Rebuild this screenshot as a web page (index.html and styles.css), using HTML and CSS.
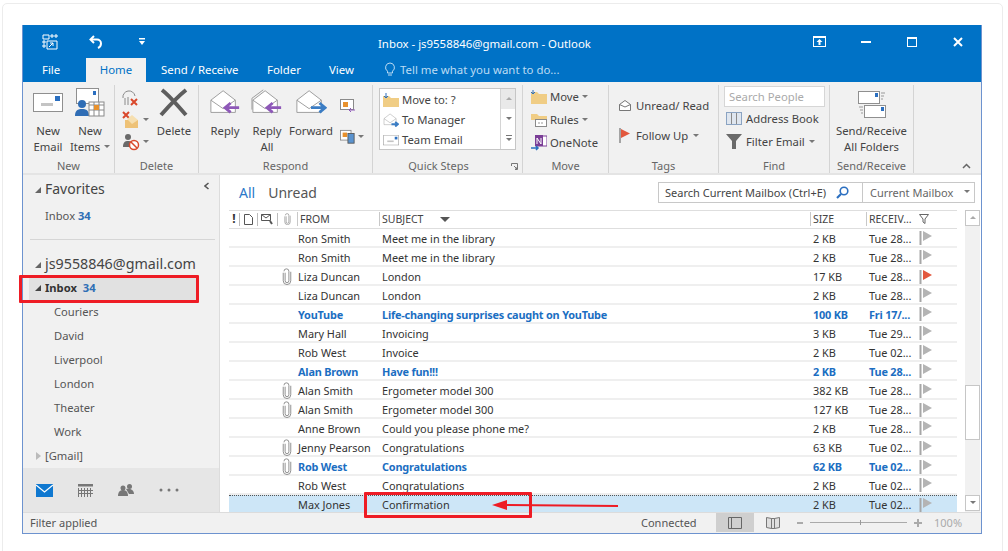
FILE: index.html
```html
<!DOCTYPE html>
<html lang="en">
<head>
  <meta charset="UTF-8" />
  <title>Inbox - js9558846@gmail.com - Outlook</title>
  <link rel="stylesheet" href="styles.css">
</head>
<body>
  <svg class="defs" width="0" height="0">
    <symbol id="clip" viewBox="0 0 10 18">
      <path d="M3 5v8.500a2 2 0 0 0 4 0V3.500a2.600 2.600 0 0 0-5.200 0M1 5v8.500a4 4 0 0 0 8 0V4" fill="none" stroke="#8a8a8a" stroke-width="1"/>
    </symbol>
    <symbol id="flag" viewBox="0 0 14 16">
      <path d="M1.500 1v14" stroke="#a6a6a6" stroke-width="2"/>
      <path d="M4 1l9 5-9 5z" fill="#b4b4b4"/>
    </symbol>
    <symbol id="flag-red" viewBox="0 0 14 16">
      <path d="M1.500 1v14" stroke="#a6a6a6" stroke-width="2"/>
      <path d="M4 1l9 5-9 5z" fill="#e2583e"/>
    </symbol>
    <symbol id="open-mail" viewBox="0 0 34 30">
      <path d="M2 12L15 2l13 10v13H2z" fill="#fff" stroke="#9a9a9a"/>
      <path d="M2 12l13 9 13-9" fill="none" stroke="#9a9a9a"/>
    </symbol>
    <symbol id="mail-card" viewBox="0 0 30 20">
      <rect x=".5" y=".5" width="29" height="18" fill="#fff" stroke="#8f8f8f"/>
      <rect x="22" y="3" width="5" height="5" fill="#2b6fc0"/>
      <rect x="8" y="10" width="12" height="3" fill="#c4c4c4"/>
    </symbol>
  </svg>

  <main class="card">
    <div class="window">
      <header class="titlebar">
        <div class="qat">
          <svg class="qat-app" width="16" height="16" viewBox="0 0 16 16"><path d="M1 1h6v4H1zM9 1h2v2H9zM13 1h2v2h-2zM1 7h2v2H1zM1 11h2v2H1zM5 7h10v8H5z" fill="none" stroke="#fff"/><path d="M7 13l4-4M8 9h3v3" fill="none" stroke="#fff"/></svg>
          <svg class="qat-undo" width="15" height="14" viewBox="0 0 15 14"><path d="M5 1L1.500 4.500 5 8" fill="none" stroke="#fff" stroke-width="2"/><path d="M2 4.500h6a4 4 0 0 1 4 4c0 2-1 3.500-3 4.500" fill="none" stroke="#fff" stroke-width="2"/></svg>
          <svg class="qat-more" width="6" height="7" viewBox="0 0 6 7"><path d="M0 0h6v1.500H0zM0 3h6L3 7z" fill="#fff"/></svg>
        </div>
        <div class="title">Inbox - js9558846@gmail.com - Outlook</div>
        <div class="winbtns">
          <svg width="13" height="11" viewBox="0 0 13 11"><rect x=".5" y=".5" width="12" height="10" fill="none" stroke="#fff"/><rect y="0" width="13" height="2" fill="#fff"/><path d="M6.500 3l3 3H7.500v3h-2V6h-2z" fill="#fff"/></svg>
          <svg width="10" height="2" viewBox="0 0 10 2"><rect width="10" height="2" fill="#fff"/></svg>
          <svg width="10" height="10" viewBox="0 0 10 10"><rect x=".5" y=".5" width="9" height="9" fill="none" stroke="#fff"/><rect width="10" height="2" fill="#fff"/></svg>
          <svg width="10" height="10" viewBox="0 0 10 10"><path d="M1 1l8 8M9 1l-8 8" stroke="#fff" stroke-width="2"/></svg>
        </div>
      </header>

      <nav class="tabs">
        <span class="tab tab-file">File</span>
        <span class="tab tab-home">Home</span>
        <span class="tab tab-send">Send / Receive</span>
        <span class="tab tab-folder">Folder</span>
        <span class="tab tab-view">View</span>
        <span class="tellme">
          <svg width="12" height="15" viewBox="0 0 12 15"><path d="M6 1a4.500 4.500 0 0 0-2.500 8.200V11h5V9.200A4.500 4.500 0 0 0 6 1zM4 13h4" fill="none" stroke="#bcdcf4"/></svg>
          Tell me what you want to do...
        </span>
      </nav>

      <section class="ribbon">
        <div class="group group-new">
          <div class="group-body">
            <div class="bigbtn">
              <svg class="bigicon" width="30" height="20"><use href="#mail-card"/></svg>
              <span>New<br>Email</span>
            </div>
            <div class="bigbtn">
              <svg class="bigicon" width="30" height="30" viewBox="0 0 30 30"><rect x="1.500" y=".5" width="22" height="15" fill="#fff" stroke="#8f8f8f"/><rect x="18" y="3" width="3" height="4" fill="#2b6fc0"/><circle cx="7" cy="16" r="4" fill="#2f6db5"/><path d="M0 28c0-6 3-7 7-7s7 1 7 7z" fill="#2f6db5"/><rect x="14" y="14" width="15" height="14" fill="#fff" stroke="#8a8a8a"/><path d="M14 17h15M19 14v14M24 14v14M14 22h15" stroke="#8a8a8a"/><rect x="19" y="17" width="5" height="5" fill="#e8912d"/></svg>
              <span>New<br>Items <i class="caret"></i></span>
            </div>
          </div>
          <div class="group-label">New</div>
        </div>

        <div class="group group-delete">
          <div class="group-body">
            <div class="smallcol">
              <svg width="18" height="18" viewBox="0 0 18 18"><path d="M1 9a6 6 0 0 1 12-2" fill="none" stroke="#8a8a8a"/><path d="M3 9v7M6 8v8" stroke="#8a8a8a"/><path d="M9 10l6 6M15 10l-6 6" stroke="#d9482b" stroke-width="2"/></svg>
              <span class="iconrow"><svg width="18" height="18" viewBox="0 0 18 18"><path d="M1 1l6 6M7 1L1 7" stroke="#d9482b" stroke-width="2"/><path d="M3 9h13v8H3z" fill="#eec277"/><path d="M5 8l5-4 6 5-6 4z" fill="#f6dfb0"/></svg><i class="caret"></i></span>
              <span class="iconrow"><svg width="18" height="18" viewBox="0 0 18 18"><circle cx="6" cy="4" r="3" fill="#6a6a6a"/><path d="M1 14c0-5 2-6 5-6s5 1 5 6z" fill="#6a6a6a"/><circle cx="12" cy="12" r="4.500" fill="#fff" stroke="#d9482b" stroke-width="1.500"/><path d="M9 9l6 6" stroke="#d9482b" stroke-width="1.500"/></svg><i class="caret"></i></span>
            </div>
            <div class="bigbtn btn-delete">
              <svg class="bigicon" width="30" height="30" viewBox="0 0 30 30"><path d="M3 2c8 6 14 14 24 25M27 2C18 9 10 18 2 27" fill="none" stroke="#5e5e5e" stroke-width="4"/></svg>
              <span>Delete</span>
            </div>
          </div>
          <div class="group-label">Delete</div>
        </div>

        <div class="group group-respond">
          <div class="group-body">
            <div class="bigbtn btn-reply">
              <svg class="bigicon" width="32" height="30" viewBox="0 0 34 30"><use href="#open-mail"/><path d="M32 20H18M23 15l-6 5 6 5" fill="none" stroke="#8e58b8" stroke-width="3"/></svg>
              <span>Reply</span>
            </div>
            <div class="bigbtn btn-replyall">
              <svg class="bigicon" width="32" height="30" viewBox="0 0 34 30"><path d="M1 10L13 1" fill="none" stroke="#9a9a9a"/><path d="M1 10v12" stroke="#9a9a9a"/><use href="#open-mail"/><path d="M32 20H18M23 15l-6 5 6 5" fill="none" stroke="#8e58b8" stroke-width="3"/></svg>
              <span>Reply<br>All</span>
            </div>
            <div class="bigbtn btn-forward">
              <svg class="bigicon" width="32" height="30" viewBox="0 0 34 30"><use href="#open-mail"/><path d="M17 20h14M26 15l6 5-6 5" fill="none" stroke="#3b7dc4" stroke-width="3"/></svg>
              <span>Forward</span>
            </div>
            <div class="smallcol respond-more">
              <svg width="16" height="14" viewBox="0 0 16 14"><rect x=".5" y=".5" width="13" height="10" fill="#fff" stroke="#8a8a8a"/><rect x="3" y="3" width="5" height="5" fill="#e8912d"/><path d="M15 11H9M11 9l-2 2 2 2" fill="none" stroke="#8e58b8"/></svg>
              <span class="iconrow"><svg width="17" height="16" viewBox="0 0 17 16"><rect x=".5" y=".5" width="12" height="11" fill="#fff" stroke="#8a8a8a"/><rect x="3" y="3" width="5" height="5" fill="#e8912d"/><rect x="9" y="4" width="7" height="11" fill="#5a93cf" stroke="#555"/></svg><i class="caret"></i></span>
            </div>
          </div>
          <div class="group-label">Respond</div>
        </div>

        <div class="group group-quick">
          <div class="group-body">
            <div class="gallery">
              <div class="gallery-items">
                <div class="gallery-item"><svg width="16" height="14" viewBox="0 0 16 14"><path d="M0 3h6l2 2h8v9H0z" fill="#f0cd85"/><path d="M3 0v5M1 3l2 2 2-2" fill="none" stroke="#2b6fc0"/></svg>Move to: ?</div>
                <div class="gallery-item"><svg width="16" height="14" viewBox="0 0 34 30"><use href="#open-mail"/><path d="M18 24h14M26 19l6 5-6 5" fill="none" stroke="#3b7dc4" stroke-width="4"/></svg>To Manager</div>
                <div class="gallery-item"><svg width="16" height="11"  viewBox="0 0 30 20"><use href="#mail-card"/></svg>Team Email</div>
              </div>
              <div class="gallery-arrows">
                <span class="arrow arrow-off"><i class="caret caret-up"></i></span>
                <span class="arrow"><i class="caret"></i></span>
                <span class="arrow"><i class="caret caret-more"></i></span>
              </div>
            </div>
          </div>
          <div class="group-label label-quick">Quick Steps<svg class="launcher" width="7" height="7" viewBox="0 0 7 7"><path d="M.5 3V.5h6v6H4M3 3l3 3M4 6h2V4" fill="none" stroke="#777"/></svg></div>
        </div>

        <div class="group group-move">
          <div class="group-body">
            <div class="textcol">
              <div class="textbtn"><svg width="16" height="14" viewBox="0 0 16 14"><path d="M0 2h6l2 2h8v10H0z" fill="#f0cd85"/><path d="M2 0v4M0 2l2 2 2-2" fill="none" stroke="#2b6fc0"/></svg>Move <i class="caret"></i></div>
              <div class="textbtn"><svg width="16" height="14" viewBox="0 0 16 14"><path d="M0 1h6l2 2h8v4H0z" fill="#f0cd85"/><rect x="4.500" y="6.500" width="11" height="7" fill="#fff" stroke="#8a8a8a"/><path d="M7 10h6" stroke="#999" stroke-dasharray="2 1"/></svg>Rules <i class="caret"></i></div>
              <div class="textbtn"><svg width="16" height="16" viewBox="0 0 16 16"><rect x="5" y="1" width="11" height="10" fill="#fff" stroke="#7a3d96"/><rect x="4" y="0" width="8" height="11" fill="#7a3d96"/><path d="M6 9V3l4 6V3" fill="none" stroke="#fff"/><path d="M0 13h7M5 11l2 2-2 2" fill="none" stroke="#2b6fc0" stroke-width="1.500"/></svg>OneNote</div>
            </div>
          </div>
          <div class="group-label">Move</div>
        </div>

        <div class="group group-tags">
          <div class="group-body">
            <div class="textcol tagcol">
              <div class="textbtn"><svg width="12" height="11" viewBox="0 0 12 11"><path d="M.5 4.500L6 .5l5.500 4v6H.5z" fill="#fff" stroke="#777"/><path d="M.5 4.500L6 7l5.500-2.500" fill="none" stroke="#777"/></svg>Unread/ Read</div>
              <div class="textbtn"><svg width="12" height="15" viewBox="0 0 12 15"><path d="M1 0v15" stroke="#8a8a8a" stroke-width="1.500"/><path d="M2 1l9 4.500-9 4.500z" fill="#e2583e"/></svg>Follow Up <i class="caret"></i></div>
            </div>
          </div>
          <div class="group-label">Tags</div>
        </div>

        <div class="group group-find">
          <div class="group-body">
            <div class="textcol findcol">
              <div class="searchpeople">Search People</div>
              <div class="textbtn"><svg width="16" height="13" viewBox="0 0 16 13"><rect x=".5" y=".5" width="15" height="12" fill="#dfe6ef" stroke="#8aa3c2"/><path d="M5.500 1v11M10.500 1v11" stroke="#8a8a8a"/></svg>Address Book</div>
              <div class="textbtn"><svg width="16" height="15" viewBox="0 0 16 15"><path d="M0 0h16l-6 7v8H6V7z" fill="#6a6a6a"/></svg>Filter Email <i class="caret"></i></div>
            </div>
          </div>
          <div class="group-label">Find</div>
        </div>

        <div class="group group-sr">
          <div class="group-body">
            <div class="bigbtn">
              <svg class="bigicon" width="28" height="28" viewBox="0 0 28 28"><rect x=".5" y=".5" width="21" height="12" fill="#fff" stroke="#8f8f8f"/><rect x="17" y="2" width="3" height="4" fill="#2b6fc0"/><path d="M23 2h4M23 5h3M23 8h2" stroke="#999"/><rect x="6.500" y="14.500" width="21" height="12" fill="#fff" stroke="#8f8f8f"/><rect x="23" y="16" width="3" height="4" fill="#2b6fc0"/><path d="M1 16h4M2 19h3M3 22h2" stroke="#999"/></svg>
              <span>Send/Receive<br>All Folders</span>
            </div>
          </div>
          <div class="group-label">Send/Receive</div>
        </div>

        <svg class="collapse" width="9" height="6" viewBox="0 0 9 6"><path d="M1 5l3.500-3.500L8 5" fill="none" stroke="#666" stroke-width="1.500"/></svg>
      </section>

      <div class="content">
        <aside class="nav">
          <div class="nav-tree">
            <div class="nav-fav"><i class="tri"></i>Favorites<svg class="nav-collapse" width="5" height="8" viewBox="0 0 5 8"><path d="M4.500 1L1 4l3.500 3" fill="none" stroke="#555" stroke-width="1.500"/></svg></div>
            <div class="nav-inbox-fav">Inbox <b>34</b></div>
            <div class="nav-account"><i class="tri"></i>js9558846@gmail.com</div>
            <div class="nav-inbox"><i class="tri tri-dark"></i><strong>Inbox</strong> <b>34</b></div>
            <div class="folder">Couriers</div>
            <div class="folder">David</div>
            <div class="folder">Liverpool</div>
            <div class="folder">London</div>
            <div class="folder">Theater</div>
            <div class="folder">Work</div>
            <div class="gmail"><i class="tri-open"></i>[Gmail]</div>
          </div>
          <div class="nav-bottom">
            <svg width="17" height="13" viewBox="0 0 17 13"><rect width="17" height="13" fill="#0f78d0"/><path d="M0 1l8.500 7L17 1" fill="none" stroke="#fff" stroke-width="1.200"/></svg>
            <svg width="15" height="13" viewBox="0 0 15 13"><rect y="0" width="15" height="2.500" fill="#777"/><path d="M.5 4v9M3.500 4v9M6.500 4v9M9.500 4v9M12.500 4v9M0 6.500h15M0 9.500h15" stroke="#777"/></svg>
            <svg width="16" height="12" viewBox="0 0 16 12"><circle cx="5" cy="4" r="2.500" fill="#777"/><circle cx="11.500" cy="2.500" r="2.500" fill="#777"/><path d="M0 12c0-4 2-6 5-6s5 2 5 6z" fill="#777"/><path d="M8 5c3-1 8 0 8 5h-5z" fill="#777"/></svg>
            <svg width="20" height="4" viewBox="0 0 20 4"><circle cx="2" cy="2" r="1.500" fill="#777"/><circle cx="10" cy="2" r="1.500" fill="#777"/><circle cx="18" cy="2" r="1.500" fill="#777"/></svg>
          </div>
        </aside>

        <section class="mail">
          <div class="mail-top">
            <div class="filters"><span class="filter-all">All</span><span>Unread</span></div>
            <div class="searchbar">
              <div class="searchbar-input">Search Current Mailbox (Ctrl+E)
                <svg width="13" height="13" viewBox="0 0 13 13"><circle cx="8" cy="5" r="3.800" fill="none" stroke="#2b6fc0" stroke-width="1.600"/><path d="M5 8l-4 4" stroke="#2b6fc0" stroke-width="2.200"/></svg>
              </div>
              <div class="searchbar-scope">Current Mailbox <i class="caret"></i></div>
            </div>
          </div>
          <div class="list-wrap">
            <div class="list">
              <div class="row head">
                <span class="head-icons">
                  <span class="hi"><b>!</b></span>
                  <span class="hi"><svg width="9" height="11" viewBox="0 0 9 11"><path d="M.5.5h5l3 3v7h-8z" fill="#fff" stroke="#555"/></svg></span>
                  <span class="hi"><svg width="13" height="11" viewBox="0 0 13 11"><path d="M.5.5h9v6h-9zM.5.5L5 4l4.500-3.500" fill="none" stroke="#555"/><path d="M9 7l2 3" stroke="#555" stroke-width="2"/></svg></span>
                  <span class="hi hi-last"><svg class="clip" width="7" height="12"><use href="#clip"/></svg></span>
                </span>
                <span class="cell">FROM</span>
                <span class="cell head-subject">SUBJECT<i class="sort"></i></span>
                <span class="cell">SIZE</span>
                <span class="cell">RECEIV...</span>
                <span class="head-flag"><svg width="10" height="10" viewBox="0 0 10 10"><path d="M.5.5h9L6 5v4.500L4 8V5z" fill="none" stroke="#666"/></svg></span>
              </div>

              <div class="row"><span></span><span>Ron Smith</span><span>Meet me in the library</span><span>2 KB</span><span>Tue 28...</span><svg class="flag"><use href="#flag"/></svg></div>
              <div class="row"><span></span><span>Ron Smith</span><span>Meet me in the library</span><span>2 KB</span><span>Tue 28...</span><svg class="flag"><use href="#flag"/></svg></div>
              <div class="row"><span class="has-clip"><svg class="clip" width="10" height="17"><use href="#clip"/></svg></span><span>Liza Duncan</span><span>London</span><span>17 KB</span><span>Tue 28...</span><svg class="flag"><use href="#flag-red"/></svg></div>
              <div class="row"><span></span><span>Liza Duncan</span><span>London</span><span>2 KB</span><span>Tue 28...</span><svg class="flag"><use href="#flag"/></svg></div>
              <div class="row unread"><span></span><span>YouTube</span><span>Life-changing surprises caught on YouTube</span><span>100 KB</span><span>Fri 17/...</span><svg class="flag"><use href="#flag"/></svg></div>
              <div class="row"><span></span><span>Mary Hall</span><span>Invoicing</span><span>3 KB</span><span>Tue 29...</span><svg class="flag"><use href="#flag"/></svg></div>
              <div class="row"><span></span><span>Rob West</span><span>Invoice</span><span>2 KB</span><span>Tue 02...</span><svg class="flag"><use href="#flag"/></svg></div>
              <div class="row unread"><span></span><span>Alan Brown</span><span>Have fun!!!</span><span>2 KB</span><span>Tue 28...</span><svg class="flag"><use href="#flag"/></svg></div>
              <div class="row"><span class="has-clip"><svg class="clip" width="10" height="17"><use href="#clip"/></svg></span><span>Alan Smith</span><span>Ergometer model 300</span><span>382 KB</span><span>Tue 28...</span><svg class="flag"><use href="#flag"/></svg></div>
              <div class="row"><span class="has-clip"><svg class="clip" width="10" height="17"><use href="#clip"/></svg></span><span>Alan Smith</span><span>Ergometer model 300</span><span>127 KB</span><span>Tue 28...</span><svg class="flag"><use href="#flag"/></svg></div>
              <div class="row"><span></span><span>Anne Brown</span><span>Could you please phone me?</span><span>2 KB</span><span>Tue 28...</span><svg class="flag"><use href="#flag"/></svg></div>
              <div class="row"><span class="has-clip"><svg class="clip" width="10" height="17"><use href="#clip"/></svg></span><span>Jenny Pearson</span><span>Congratulations</span><span>63 KB</span><span>Tue 02...</span><svg class="flag"><use href="#flag"/></svg></div>
              <div class="row unread"><span class="has-clip"><svg class="clip" width="10" height="17"><use href="#clip"/></svg></span><span>Rob West</span><span>Congratulations</span><span>62 KB</span><span>Tue 02...</span><svg class="flag"><use href="#flag"/></svg></div>
              <div class="row"><span></span><span>Rob West</span><span>Congratulations</span><span>2 KB</span><span>Tue 02...</span><svg class="flag"><use href="#flag"/></svg></div>
              <div class="row selected"><span></span><span>Max Jones</span><span>Confirmation</span><span>2 KB</span><span>Tue 02...</span><svg class="flag"><use href="#flag"/></svg></div>
            </div>
            <div class="scrollbar">
              <span class="sb-btn"><i class="caret caret-up"></i></span>
              <span class="sb-thumb"></span>
              <span class="sb-btn"><i class="caret"></i></span>
            </div>
          </div>
        </section>
      </div>

      <footer class="status">
        <span class="status-left">Filter applied</span>
        <span class="status-conn">Connected</span>
        <span class="view-btn view-on"><svg width="14" height="12" viewBox="0 0 14 12"><path d="M.5.5h13v11H.5zM3.500.5v11" fill="none" stroke="#666"/></svg></span>
        <span class="view-btn"><svg width="14" height="12" viewBox="0 0 14 12"><path d="M.5.500l5 1v10l-5-1zM13.500.500l-5 1v10l5-1zM5.500 1.500h3v10h-3z" fill="#dfdfdf" stroke="#777"/></svg></span>
        <span class="zoom"><i class="zoom-minus"></i><i class="zoom-track"></i><i class="zoom-plus"></i></span>
        <span class="zoom-pct">100%</span>
      </footer>
    </div>

    <!-- annotations drawn over the screenshot -->
    <div class="mark mark-inbox"></div>
    <div class="mark mark-subject"></div>
    <svg class="mark-arrow" width="126" height="12" viewBox="0 0 126 12"><path d="M126 7L14 6" stroke="#ee1c25" stroke-width="2"/><path d="M0 6l15-5v10z" fill="#ee1c25"/></svg>
  </main>
</body>
</html>
```

FILE: styles.css
```css
* {
  box-sizing: border-box;
}

html, body {
  height: 100%;
}

body {
  margin: 0;
  background: #fff;
  color: #444;
  font-family: "Noto Sans", "Open Sans", sans-serif;
  font-size: 11px;
  overflow: hidden;
}

.defs {
  position: absolute;
}

.card {
  position: relative;
  width: 1001px;
  height: 560px;
  margin: 3px 0 0 2px;
  padding: 21px 0 0 19px;
  border: 1px solid #ececec;
  border-radius: 5px;
}

.window {
  display: flex;
  flex-direction: column;
  width: 960px;
  height: 509px;
  border: 1px solid #6d93cf;
  border-top: 0;
  background: #fff;
}

/* Title bar + tabs */

.titlebar {
  display: flex;
  align-items: center;
  height: 33px;
  background: #0072c6;
  color: #fff;
  position: relative;
}

.qat {
  display: flex;
  align-items: center;
  padding-left: 19px;
  width: 130px;
}

.qat-undo {
  margin-left: 31px;
}

.qat-more {
  margin-left: 35px;
}

.title {
  flex: 1;
  padding: 3px 0 0 225px;
  font-size: 11.4px;
}

.winbtns {
  display: flex;
  align-items: center;
  gap: 36px;
  padding-right: 18px;
}

.winbtns svg:nth-child(2) {
  margin-left: -1px;
}

.tabs {
  display: flex;
  align-items: center;
  height: 24px;
  background: #0072c6;
  color: #fff;
  font-size: 11.4px;
}

.tab {
  line-height: 24px;
}

.tab-file {
  margin-left: 19px;
  width: 44px;
}

.tab-home {
  width: 60px;
  background: #f1f1f1;
  color: #0072c6;
  text-align: center;
}

.tab-send {
  margin-left: 15px;
  width: 106px;
}

.tab-folder {
  width: 62px;
}

.tab-view {
  width: 55px;
}

.tellme {
  display: flex;
  align-items: center;
  gap: 4px;
  padding-bottom: 2px;
  color: #bcdcf4;
}

/* Ribbon */

.ribbon {
  position: relative;
  display: flex;
  height: 93px;
  background: #f1f1f1;
  border-bottom: 2px solid #e4e4e4;
  font-size: 11.3px;
  line-height: 16px;
  color: #444;
}

.group {
  display: flex;
  flex-direction: column;
  margin: 3px 0 0;
  border-right: 1px solid #d4d4d4;
}

.group-new { width: 92px; }
.group-delete { width: 84px; }
.group-respond { width: 174px; }
.group-quick { width: 150px; }
.group-move { width: 86px; }
.group-tags { width: 110px; }
.group-find { width: 111px; }
.group-sr { width: 84px; }

.group-body {
  display: flex;
  flex: 1;
  min-height: 0;
  padding-top: 1px;
}

.group-label {
  position: relative;
  height: 15px;
  line-height: 15px;
  text-align: center;
  font-size: 11px;
  color: #666;
}

.label-quick {
  padding-right: 18px;
}

.launcher {
  position: absolute;
  right: 4px;
  top: 5px;
}

.bigbtn {
  display: flex;
  flex-direction: column;
  align-items: center;
  text-align: center;
  white-space: nowrap;
}

.bigicon {
  flex: none;
  height: 34px;
  margin-bottom: 3px;
}

.group-new .bigbtn:first-child { margin-left: 10px; width: 30px; }
.group-new .bigbtn:last-child { margin-left: 12px; width: 30px; }

.smallcol {
  display: flex;
  flex-direction: column;
  gap: 4px;
  padding: 3px 0 0 7px;
  width: 44px;
}

.iconrow {
  display: flex;
  align-items: center;
  gap: 2px;
}

.btn-delete { width: 30px; }
.btn-reply { width: 40px; margin-left: 6px; }
.btn-replyall { width: 40px; margin-left: 2px; }
.btn-forward { width: 46px; margin-left: 1px; }
.respond-more { width: 30px; padding: 13px 0 0 6px; gap: 16px; }

.caret {
  display: inline-block;
  width: 0;
  height: 0;
  margin: 0 0 2px 1px;
  border-left: 3px solid transparent;
  border-right: 3px solid transparent;
  border-top: 3px solid #777;
  vertical-align: middle;
}

.caret-up {
  border-top: 0;
  border-bottom: 3px solid #aaa;
}

.caret-more {
  position: relative;
  margin-top: 3px;
}

.caret-more::before {
  content: "";
  position: absolute;
  left: -3px;
  top: -6px;
  width: 6px;
  height: 1px;
  background: #777;
}

.gallery {
  display: flex;
  width: 137px;
  height: 62px;
  margin: 2px 0 0 6px;
  border: 1px solid #c6c6c6;
  background: #fff;
}

.gallery-items {
  flex: 1;
  padding-top: 1px;
}

.gallery-item {
  display: flex;
  align-items: center;
  gap: 3px;
  height: 20px;
  padding-left: 3px;
  white-space: nowrap;
}

.gallery-arrows {
  display: flex;
  flex-direction: column;
  width: 15px;
  border-left: 1px solid #d4d4d4;
}

.arrow {
  display: flex;
  flex: 1;
  align-items: center;
  justify-content: center;
}

.arrow-off {
  background: #e9e9e9;
}

.textcol {
  display: flex;
  flex-direction: column;
  gap: 6px;
  padding: 2px 0 0 8px;
}

.textbtn {
  display: flex;
  align-items: center;
  gap: 3px;
  height: 17px;
  white-space: nowrap;
}

.textbtn .caret {
  margin-left: 0;
  margin-bottom: 0;
}

.tagcol {
  gap: 13px;
  padding: 11px 0 0 10px;
}

.tagcol .textbtn {
  gap: 5px;
}

.findcol {
  gap: 6px;
  padding: 1px 0 0 5px;
}

.findcol .textbtn {
  padding-left: 2px;
  gap: 4px;
}

.searchpeople {
  width: 101px;
  height: 21px;
  margin: -1px 0 -3px;
  padding: 1px 0 0 4px;
  border: 1px solid #d6d6d6;
  background: #fff;
  color: #aaa;
  line-height: 18px;
}

.group-sr {
  align-items: center;
  border-right: 1px solid #d4d4d4;
}

.group-sr .group-body {
  padding-top: 3px;
}

.group-sr .bigicon {
  margin-bottom: 1px;
}

.collapse {
  position: absolute;
  right: 10px;
  bottom: 4px;
}

/* Left folder pane */

.content {
  display: flex;
  flex: 1;
  min-height: 0;
}

.nav {
  display: flex;
  flex-direction: column;
  flex: none;
  width: 197px;
  background: #f1f1f1;
  border-right: 1px solid #dcdcdc;
  color: #555;
}

.nav-tree {
  flex: 1;
  min-height: 0;
  font-size: 11.2px;
}

.tri {
  display: inline-block;
  width: 0;
  height: 0;
  margin-right: 4px;
  border-left: 6px solid transparent;
  border-bottom: 6px solid #666;
  vertical-align: 1px;
}

.tri-dark {
  border-bottom-color: #444;
}

.tri-open {
  display: inline-block;
  width: 0;
  height: 0;
  margin-right: 4px;
  border-top: 4px solid transparent;
  border-bottom: 4px solid transparent;
  border-left: 5px solid #bbb;
}

.nav-fav {
  position: relative;
  height: 26px;
  padding: 3px 0 0 12px;
  font-size: 14px;
  line-height: 22px;
  color: #444;
}

.nav-collapse {
  position: absolute;
  right: 10px;
  top: 7px;
}

.nav-inbox-fav {
  height: 26px;
  padding-left: 22px;
  line-height: 30px;
}

.nav-inbox-fav b,
.nav-inbox b {
  color: #2f6fb5;
}

.nav-account {
  height: 41px;
  margin: 12px 4px 0 7px;
  padding: 12px 0 0 5px;
  border-top: 1px solid #d6d6d6;
  font-size: 14.3px;
  line-height: 24px;
  color: #444;
  white-space: nowrap;
}

.nav-inbox {
  height: 24px;
  margin: -2px 21px 0 6px;
  padding-left: 6px;
  background: #e1e1e1;
  color: #333;
  line-height: 20px;
}

.nav-inbox strong {
  margin-right: 3px;
}

.folder {
  height: 24px;
  padding-left: 31px;
  line-height: 20px;
}

.gmail {
  height: 24px;
  padding-left: 13px;
  line-height: 20px;
}

.nav-bottom {
  display: flex;
  align-items: center;
  flex: none;
  height: 44px;
  padding-left: 13px;
  gap: 25px;
  background: #e6e6e6;
}

/* Mail list */

.mail {
  display: flex;
  flex-direction: column;
  flex: 1;
  min-width: 0;
}

.mail-top {
  display: flex;
  align-items: center;
  justify-content: space-between;
  height: 35px;
  padding: 0 6px 1px 19px;
}

.filters {
  display: flex;
  gap: 13px;
  font-size: 14px;
  color: #555;
}

.filter-all {
  color: #2b79c9;
}

.searchbar {
  display: flex;
  height: 21px;
  border: 1px solid #c8c8c8;
  background: #fff;
  font-size: 11px;
  line-height: 19px;
}

.searchbar-input {
  display: flex;
  align-items: center;
  justify-content: space-between;
  width: 204px;
  padding: 0 13px 0 6px;
  border-right: 1px solid #c8c8c8;
}

.searchbar-scope {
  display: flex;
  align-items: center;
  justify-content: space-between;
  width: 111px;
  padding: 0 4px 0 7px;
  color: #666;
}

.list-wrap {
  display: flex;
  flex: 1;
  min-height: 0;
  padding-left: 9px;
}

.list {
  width: 728px;
  overflow: hidden;
}

.row {
  display: grid;
  grid-template-columns: 69px 82px 431px 56px 52px 38px;
  align-items: center;
  height: 19px;
  padding-top: 1px;
  border-bottom: 2px solid #efefef;
  color: #333;
  font-size: 10.9px;
  white-space: nowrap;
}

.row > span:nth-child(3),
.row > span:nth-child(4),
.row > span:nth-child(5) {
  padding-left: 2px;
}

.row.head {
  padding: 0 0 1px;
  border-bottom: 1px solid #dedede;
  border-top: 1px solid #dedede;
  background: #fff;
  color: #444;
  font-size: 10.5px;
}

.head-icons {
  display: grid;
  grid-template-columns: 11px 18px 20px 19px;
  align-items: center;
}

.hi {
  display: flex;
  align-items: center;
  justify-content: center;
  height: 13px;
  border-right: 1px solid #bbb;
}

.hi-last {
  border-right: 0;
}

.hi b {
  font-size: 12px;
  line-height: 12px;
  color: #333;
}

.cell {
  border-left: 1px solid #c8c8c8;
  padding-left: 2px !important;
  margin-left: -1px;
}

.head-subject {
  display: flex;
  align-items: center;
}

.sort {
  width: 0;
  height: 0;
  margin-left: 17px;
  border-left: 5px solid transparent;
  border-right: 5px solid transparent;
  border-top: 5px solid #555;
}

.head-flag {
  display: flex;
  align-items: center;
  height: 12px;
}

.has-clip {
  display: flex;
  justify-content: flex-end;
  padding-right: 6px;
}

.flag {
  width: 14px;
  height: 16px;
}

.unread {
  color: #1b6ec2;
  font-weight: 700;
  letter-spacing: -0.2px;
}

.selected {
  height: 18px;
  padding-top: 0;
  background: #cde6f7;
  border-top: 1px dotted #555;
  border-bottom: 0;
}

.scrollbar {
  display: flex;
  flex-direction: column;
  justify-content: flex-start;
  width: 15px;
  margin-left: 8px;
  background: #f1f1f1;
}

.sb-btn {
  display: flex;
  align-items: center;
  justify-content: center;
  height: 16px;
  border: 1px solid #c6c6c6;
  background: #fff;
}

.sb-btn:first-child {
  margin-bottom: 159px;
}

.sb-thumb {
  height: 55px;
  margin-bottom: 55px;
  border: 1px solid #c6c6c6;
  background: #fff;
}

/* Status bar */

.status {
  display: flex;
  align-items: center;
  flex: none;
  height: 21px;
  padding-bottom: 1px;
  background: #f1f1f1;
  border-top: 1px solid #dcdcdc;
  color: #555;
}

.status-left {
  padding-left: 7px;
  width: 618px;
}

.status-conn {
  width: 75px;
}

.view-btn {
  display: flex;
  align-items: center;
  justify-content: center;
  width: 38px;
  height: 100%;
}

.view-on {
  background: #cfcfcf;
}

.zoom {
  display: flex;
  align-items: center;
  margin-left: 5px;
  width: 125px;
}

.zoom-minus {
  width: 6px;
  height: 2px;
  background: #aaa;
}

.zoom-track {
  position: relative;
  width: 100px;
  height: 1px;
  margin: 0 7px;
  background: #aaa;
}

.zoom-track::after {
  content: "";
  position: absolute;
  left: 50px;
  top: -2px;
  width: 1px;
  height: 5px;
  background: #999;
}

.zoom-plus {
  position: relative;
  width: 8px;
  height: 2px;
  background: #aaa;
}

.zoom-plus::after {
  content: "";
  position: absolute;
  left: 3px;
  top: -3px;
  width: 2px;
  height: 8px;
  background: #aaa;
}

.zoom-pct {
  margin-left: 12px;
  color: #aaa;
}

/* Red annotation marks over the screenshot */

.mark {
  position: absolute;
  border: 3px solid #ee1c25;
  border-radius: 1px;
}

.mark-inbox {
  left: 16px;
  top: 271px;
  width: 180px;
  height: 28px;
}

.mark-subject {
  left: 361px;
  top: 488px;
  width: 168px;
  height: 26px;
}

.mark-arrow {
  position: absolute;
  left: 489px;
  top: 495px;
}
```
